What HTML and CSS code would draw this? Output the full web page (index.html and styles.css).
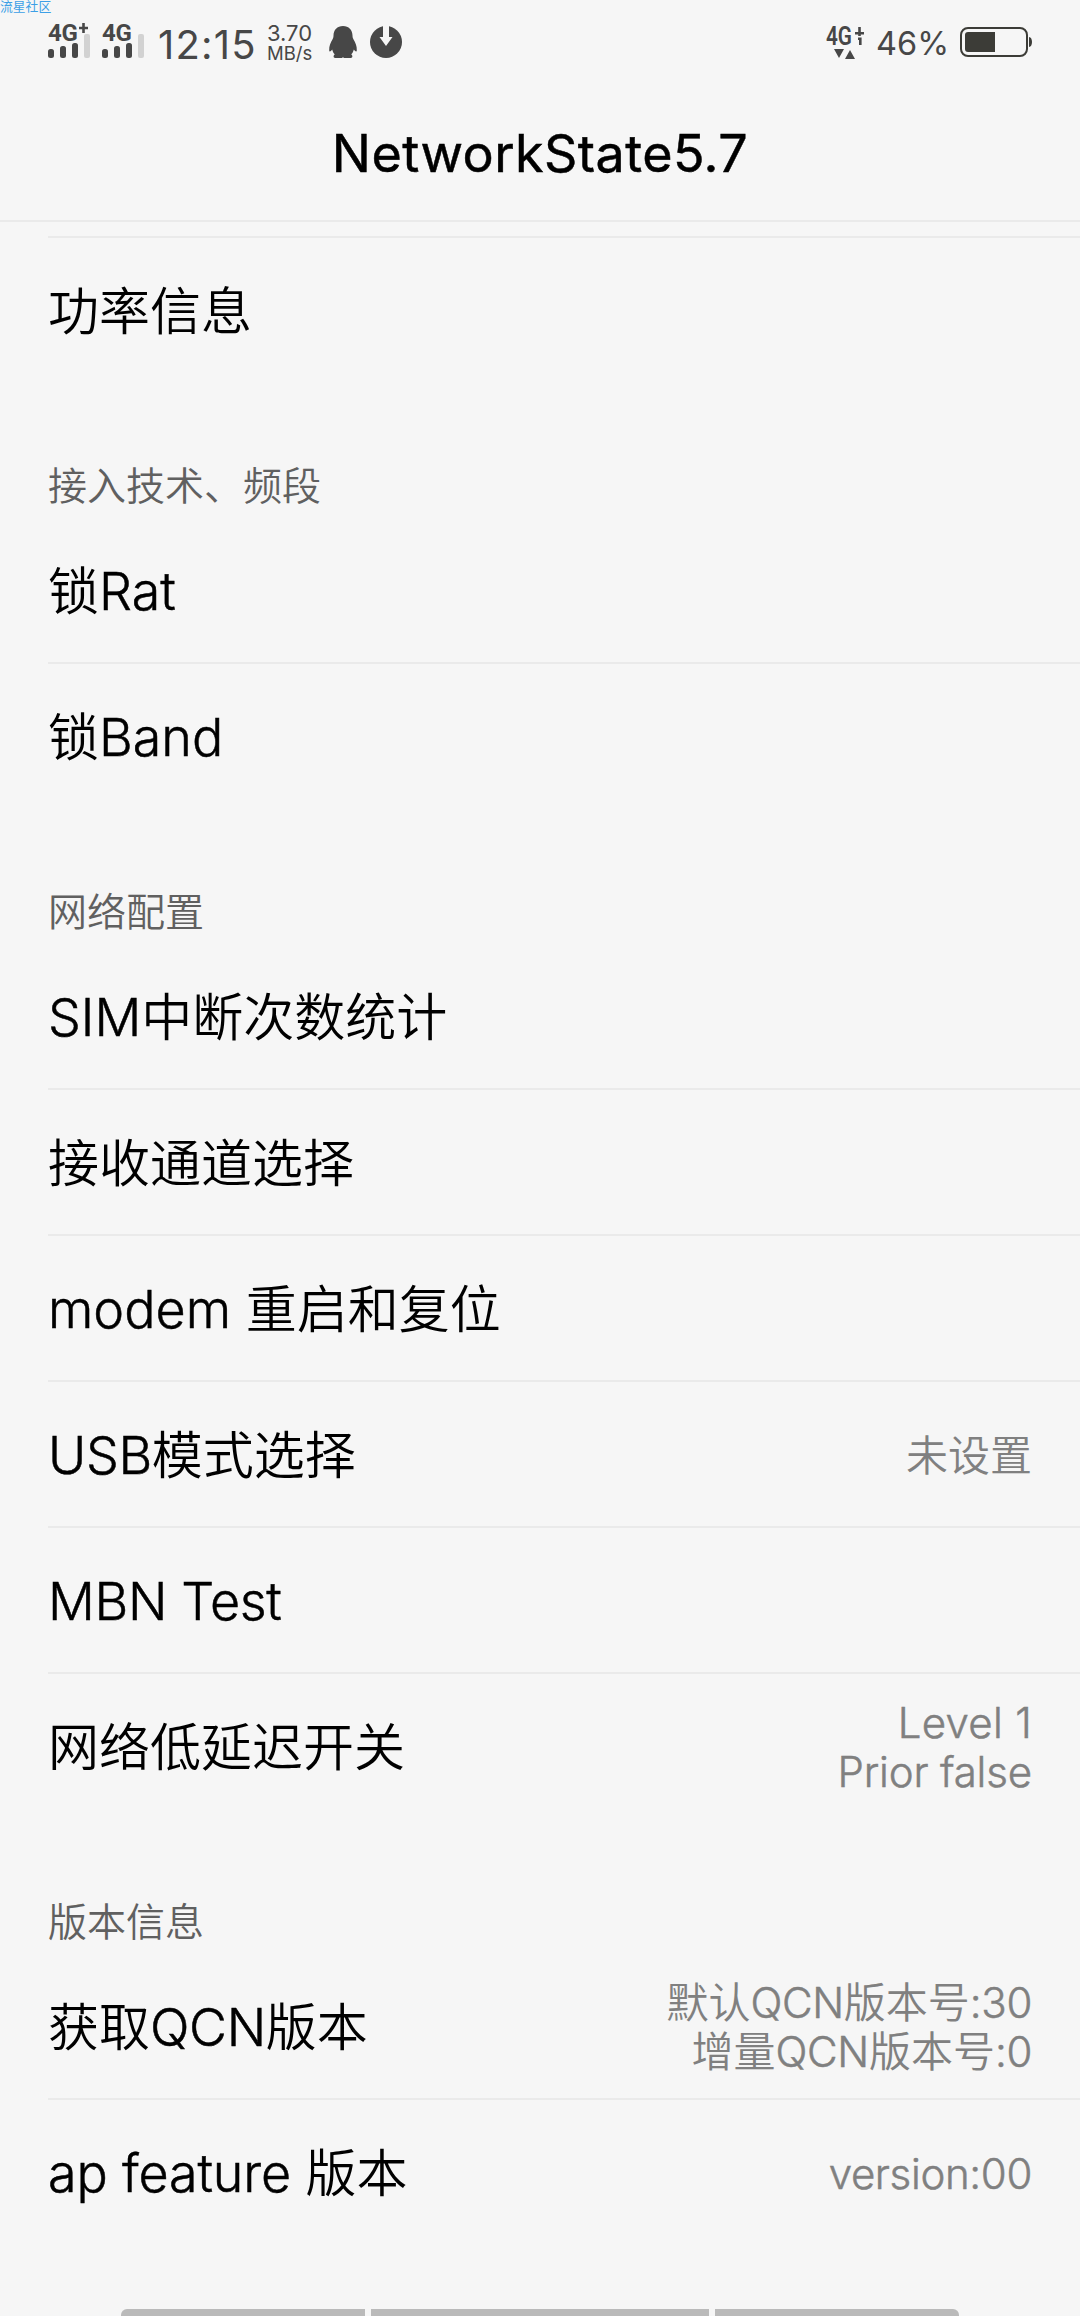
FILE: index.html
```
<!DOCTYPE html>
<html lang="zh-CN">
<head>
<meta charset="utf-8">
<title>NetworkState5.7</title>
<link rel="stylesheet" href="styles.css">
</head>
<body>
<div class="screen">
  <span class="watermark">流星社区</span>
  <header class="status">
    <div class="status-left">
      <div class="signal">
        <span class="net">4G<svg class="plus" viewBox="0 0 9 10"><path d="M4.500 0v10M0 5h9"/></svg></span>
        <svg class="bars" viewBox="0 0 42 24"><rect x="0" y="15" width="6" height="9" rx="2.5"/><rect x="12" y="12" width="6" height="12" rx="2.5"/><rect x="24" y="9" width="6" height="15" rx="2.5"/><rect class="dim" x="36" y="0" width="6" height="24" rx="2"/></svg>
      </div>
      <div class="signal second">
        <span class="net">4G</span>
        <svg class="bars" viewBox="0 0 42 24"><rect x="0" y="15" width="6" height="9" rx="2.5"/><rect x="12" y="12" width="6" height="12" rx="2.5"/><rect x="24" y="9" width="6" height="15" rx="2.5"/><rect class="dim" x="36" y="0" width="6" height="24" rx="2"/></svg>
      </div>
      <span class="clock">12:15</span>
      <div class="speed"><span class="rate">3.70</span><span class="unit">MB/s</span></div>
      <svg class="penguin" viewBox="0 0 28 32"><path d="M14 0C8.200 0 4.500 4 4.500 9.500c0 1.500-.3 2.500-.8 3.500C1.500 16.500 0 20 .2 24.500c.1 1.800 1.500 1.300 3-.9.5 2.200 1.500 3.800 2.600 5-1.500.7-1.800 3.400.4 3.400h6.300c.8 0 1.200-.6 1.500-1 .3.400.7 1 1.500 1h6.300c2.200 0 1.900-2.700.4-3.400 1.100-1.200 2.100-2.800 2.600-5 1.500 2.200 2.900 2.700 3 .9.200-4.500-1.300-8-3.500-11.500-.5-1-.8-2-.8-3.500C23.500 4 19.800 0 14 0Z"/></svg>
      <svg class="download" viewBox="0 0 32 32"><circle cx="16" cy="16" r="16"/><path class="cut" d="M13 0h6v11h3.500L16 20 9.500 11H13Z"/></svg>
    </div>
    <div class="status-right">
      <svg class="data" viewBox="0 -10 38 46"><text x="0" y="18" textLength="26" lengthAdjust="spacingAndGlyphs">4G</text><path d="M29 5h9v2.600h-9zM32.200 0h2.600v9h-2.600zM32 10.500h3.600V18H33v-5h-1z"/><path d="M8 22h10l-5 9ZM19 32h10l-5-9Z"/></svg>
      <span class="percent">46%</span>
      <svg class="battery" viewBox="0 0 72 30"><rect class="shell" x="1" y="1" width="66" height="28" rx="7"/><path d="M8 5h27v20H8a3 3 0 0 1-3-3V8a3 3 0 0 1 3-3ZM69 10c2 0 3 2.500 3 5s-1 5-3 5Z"/></svg>
    </div>
  </header>
  <h1 class="title">NetworkState5.7</h1>
  <main class="list">
    <section>
      <div class="row"><span class="label">功率信息</span></div>
    </section>
    <section>
      <h2>接入技术、频段</h2>
      <div class="row"><span class="label">锁<b>Rat</b></span></div>
      <div class="row"><span class="label">锁<b>Band</b></span></div>
    </section>
    <section>
      <h2>网络配置</h2>
      <div class="row"><span class="label"><b>SIM</b>中断次数统计</span></div>
      <div class="row"><span class="label">接收通道选择</span></div>
      <div class="row"><span class="label"><b>modem </b>重启和复位</span></div>
      <div class="row"><span class="label"><b class="tight">USB</b>模式选择</span><span class="value">未设置</span></div>
      <div class="row"><span class="label"><b class="tight">MBN Test</b></span></div>
      <div class="row"><span class="label">网络低延迟开关</span><span class="value"><i class="level">Level 1</i><br><i class="prior">Prior false</i></span></div>
    </section>
    <section>
      <h2>版本信息</h2>
      <div class="row"><span class="label">获取<b class="tight">QCN</b>版本</span><span class="value">默认<i>QCN</i>版本号<i>:30</i><br>增量<i>QCN</i>版本号<i>:0</i></span></div>
      <div class="row"><span class="label"><b class="feature">ap feature </b>版本</span><span class="value"><i>version:00</i></span></div>
    </section>
  </main>
  <footer class="nav"><span class="key left"></span><span class="key home"></span><span class="key right"></span></footer>
</div>
</body>
</html>
```
FILE: styles.css
```
* { box-sizing: border-box; }
body {
  margin: 0;
  background: #f6f6f6;
  color: #000;
  font-family: Inter, "Noto Sans CJK SC", sans-serif;
}
.screen {
  position: relative;
  display: flex;
  flex-direction: column;
  width: 1080px;
  height: 2316px;
  overflow: hidden;
}
.watermark {
  position: absolute;
  left: 0;
  top: 0;
  font-size: 12.8px;
  line-height: 13px;
  color: #3c9fe6;
}

/* Status bar */
.status {
  display: flex;
  justify-content: space-between;
  height: 86px;
  padding: 0 48px;
  color: #474747;
}
.status svg { display: block; flex: none; fill: #474747; }
.status-left, .status-right { display: flex; align-items: flex-start; }
.signal { width: 42px; height: 58px; padding-top: 23px; }
.second { margin-left: 12px; }
.net {
  display: flex;
  height: 18px;
  font: 700 24px/20px Roboto, sans-serif;
  letter-spacing: -0.3px;
}
.net .plus {
  width: 9px;
  height: 10px;
  margin-left: 1px;
  stroke: #474747;
  stroke-width: 2.6;
}
.bars { width: 42px; height: 24px; margin-top: -7px; }
.status .dim { fill: #d2d2d2; }
.clock {
  width: 117px;
  padding: 21px 0 0 14px;
  font-size: 40px;
  line-height: 48px;
  letter-spacing: 1.2px;
}
.speed {
  display: flex;
  flex-direction: column;
  width: 62px;
  margin-left: 5px;
  padding: 23px 0 0 1px;
}
.rate { font-size: 22px; line-height: 20px; }
.unit { font-size: 18.5px; line-height: 20px; }
.penguin { width: 28px; height: 32px; margin: 26px 0 0 1px; }
.download { width: 32px; height: 32px; margin: 26px 0 0 13px; }
.status .cut { fill: #f6f6f6; }
.data { width: 38px; height: 46px; margin-top: 17px; }
.data text { font: 600 25px Roboto, sans-serif; }
.percent {
  padding: 24px 0 0 12px;
  width: 96px;
  font-size: 32.5px;
  line-height: 40px;
  white-space: nowrap;
}
.status .battery { width: 72px; height: 30px; margin: 27px 0 0; fill: #3c3c37; }
.status .shell { fill: none; stroke: #3c3c37; stroke-width: 2; }

.title {
  height: 136px;
  margin: 0;
  border-bottom: 2px solid #eaeaea;
  font-size: 52px;
  font-weight: 400;
  line-height: 136px;
  letter-spacing: 0.45px;
  text-align: center;
  -webkit-text-stroke: 0.5px #000;
}

/* Settings list */
.list { padding: 14px 0 0 48px; }
.row {
  display: flex;
  align-items: center;
  justify-content: space-between;
  height: 146px;
  padding-right: 48px;
  border-top: 2px solid #eaeaea;
  font-size: 51px;
  font-weight: 350;
  line-height: 60px;
  white-space: pre;
}
.label { padding-top: 4px; }
.row b {
  font-size: 52px;
  font-weight: inherit;
  line-height: 1;
  -webkit-text-stroke: 0.5px #000;
}
.row .tight { letter-spacing: -0.35px; }
.row .feature { letter-spacing: -0.15px; }
h2 + .row { border-top-color: transparent; }
h2 {
  height: 134px;
  margin: 0;
  padding-top: 76px;
  font-size: 39px;
  font-weight: 350;
  line-height: 56px;
  color: #606060;
}
.value {
  padding-top: 2px;
  font-size: 42px;
  line-height: 49px;
  text-align: right;
  color: #808080;
}
.value i {
  font-style: normal;
  letter-spacing: -0.35px;
  -webkit-text-stroke: 0.5px #808080;
}
.value .level { letter-spacing: 0.3px; }
.value .prior { letter-spacing: -0.15px; }

/* Gesture hints */
.nav {
  display: flex;
  gap: 6px;
  height: 7px;
  margin-top: auto;
  padding: 0 121px;
}
.key { height: 7px; background: #bababa; }
.left { width: 244px; border-top-left-radius: 6px; }
.home { width: 338px; }
.right { width: 244px; border-top-right-radius: 6px; }
```
